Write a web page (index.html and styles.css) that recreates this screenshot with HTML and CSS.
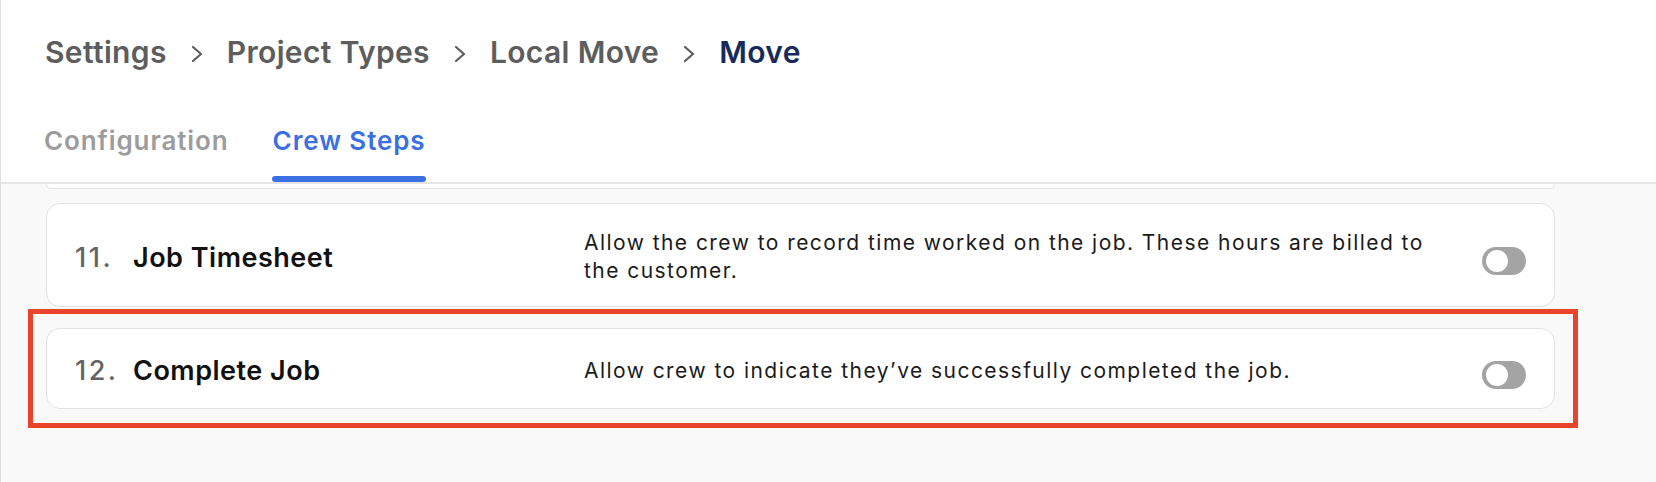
FILE: index.html
```html
<!DOCTYPE html>
<html lang="en">
<head>
<meta charset="utf-8">
<title>Move – Crew Steps</title>
<link rel="stylesheet" href="styles.css">
</head>
<body>
<div class="page">
  <header class="header">
    <nav class="crumbs">
      <span class="crumb">Settings</span>
      <svg class="chev" viewBox="0 0 12 18" width="12" height="18" aria-hidden="true"><polyline points="2,2 10,9 2,16" /></svg>
      <span class="crumb">Project Types</span>
      <svg class="chev" viewBox="0 0 12 18" width="12" height="18" aria-hidden="true"><polyline points="2,2 10,9 2,16" /></svg>
      <span class="crumb">Local Move</span>
      <svg class="chev" viewBox="0 0 12 18" width="12" height="18" aria-hidden="true"><polyline points="2,2 10,9 2,16" /></svg>
      <span class="crumb current">Move</span>
    </nav>
    <div class="tabs">
      <div class="tab">Configuration</div>
      <div class="tab active">Crew Steps</div>
    </div>
  </header>
  <main class="content">
    <div class="card-tail"></div>
    <div class="step">
      <div class="title-col"><span class="num">11.</span><span class="title">Job Timesheet</span></div>
      <p class="desc">Allow the crew to record time worked on the job. These hours are billed to the customer.</p>
      <span class="toggle"></span>
    </div>
    <div class="step highlighted">
      <div class="title-col"><span class="num">12.</span><span class="title">Complete Job</span></div>
      <p class="desc">Allow crew to indicate they’ve successfully completed the job.</p>
      <span class="toggle"></span>
      <div class="highlight-box"></div>
    </div>
  </main>
</div>
</body>
</html>
```

FILE: styles.css
```css
* { box-sizing: border-box; }
html, body { margin: 0; padding: 0; }
body {
  font-family: Inter, "Noto Sans", sans-serif;
  background: #f9f9f9;
  height: 482px;
  overflow: hidden;
}
.page {
  min-height: 482px;
  border-left: 1px solid #e0e0e0;
  background: #f9f9f9;
}
.header {
  background: #fff;
  padding: 34px 0 0 44px;
  border-bottom: 2px solid #e4e4e4;
}
.crumbs {
  display: flex;
  align-items: center;
  gap: 24px;
  height: 36px;
  font-size: 30px;
  line-height: 36px;
  font-weight: 600;
  letter-spacing: 0.35px;
  color: #5d5d5d;
}
.chev {
  fill: none;
  stroke: #5d5d5d;
  stroke-width: 2.2;
  stroke-linecap: round;
  stroke-linejoin: round;
  margin-top: 4px;
}
.crumb.current { color: #172a5c; }
.tabs {
  display: flex;
  gap: 44px;
  margin-top: 55px;
  margin-left: -1px;
}
.tab {
  position: relative;
  font-size: 26px;
  line-height: 32px;
  font-weight: 600;
  letter-spacing: 0.9px;
  color: #9c9c9c;
  padding-bottom: 25px;
}
.tab.active { color: #3b6fe4; }
.tab.active::after {
  content: "";
  position: absolute;
  left: -1px;
  right: 0;
  bottom: 0;
  height: 6px;
  border-radius: 3px;
  background: #3b6fe4;
}
.content {
  padding: 0 101px 0 45px;
}
.card-tail {
  height: 5px;
  background: #fff;
  border: 1px solid #e2e2e2;
  border-top: none;
  border-radius: 0 0 14px 14px;
  margin-bottom: 14px;
}
.step {
  position: relative;
  display: flex;
  align-items: center;
  min-height: 80px;
  background: #fff;
  border: 1px solid #e2e2e2;
  border-radius: 14px;
  padding: 25px 28px 21px 28px;
}
.step + .step { margin-top: 21px; }
.title-col {
  flex: 0 0 509px;
  display: flex;
  align-items: baseline;
  font-size: 27px;
  font-weight: 600;
}
.num {
  width: 58px;
  color: #646464;
  font-weight: 500;
  letter-spacing: 2.5px;
}
.title { color: #111; letter-spacing: 0.5px; }
.desc {
  flex: 1;
  margin: 0 30px 0 0;
  font-size: 21px;
  line-height: 28px;
  letter-spacing: 1.45px;
  color: #1b1b1b;
}
.toggle {
  position: relative;
  flex: 0 0 44px;
  width: 44px;
  height: 28px;
  margin: 4px 0 -4px;
  border-radius: 14px;
  background: #a4a4a4;
}
.toggle::after {
  content: "";
  position: absolute;
  left: 4px;
  top: 3px;
  width: 22px;
  height: 22px;
  border-radius: 50%;
  background: #fff;
}
.highlight-box {
  position: absolute;
  left: -19px;
  right: -24px;
  top: -20px;
  bottom: -20px;
  border: 5px solid #e8432b;
  pointer-events: none;
}
```
